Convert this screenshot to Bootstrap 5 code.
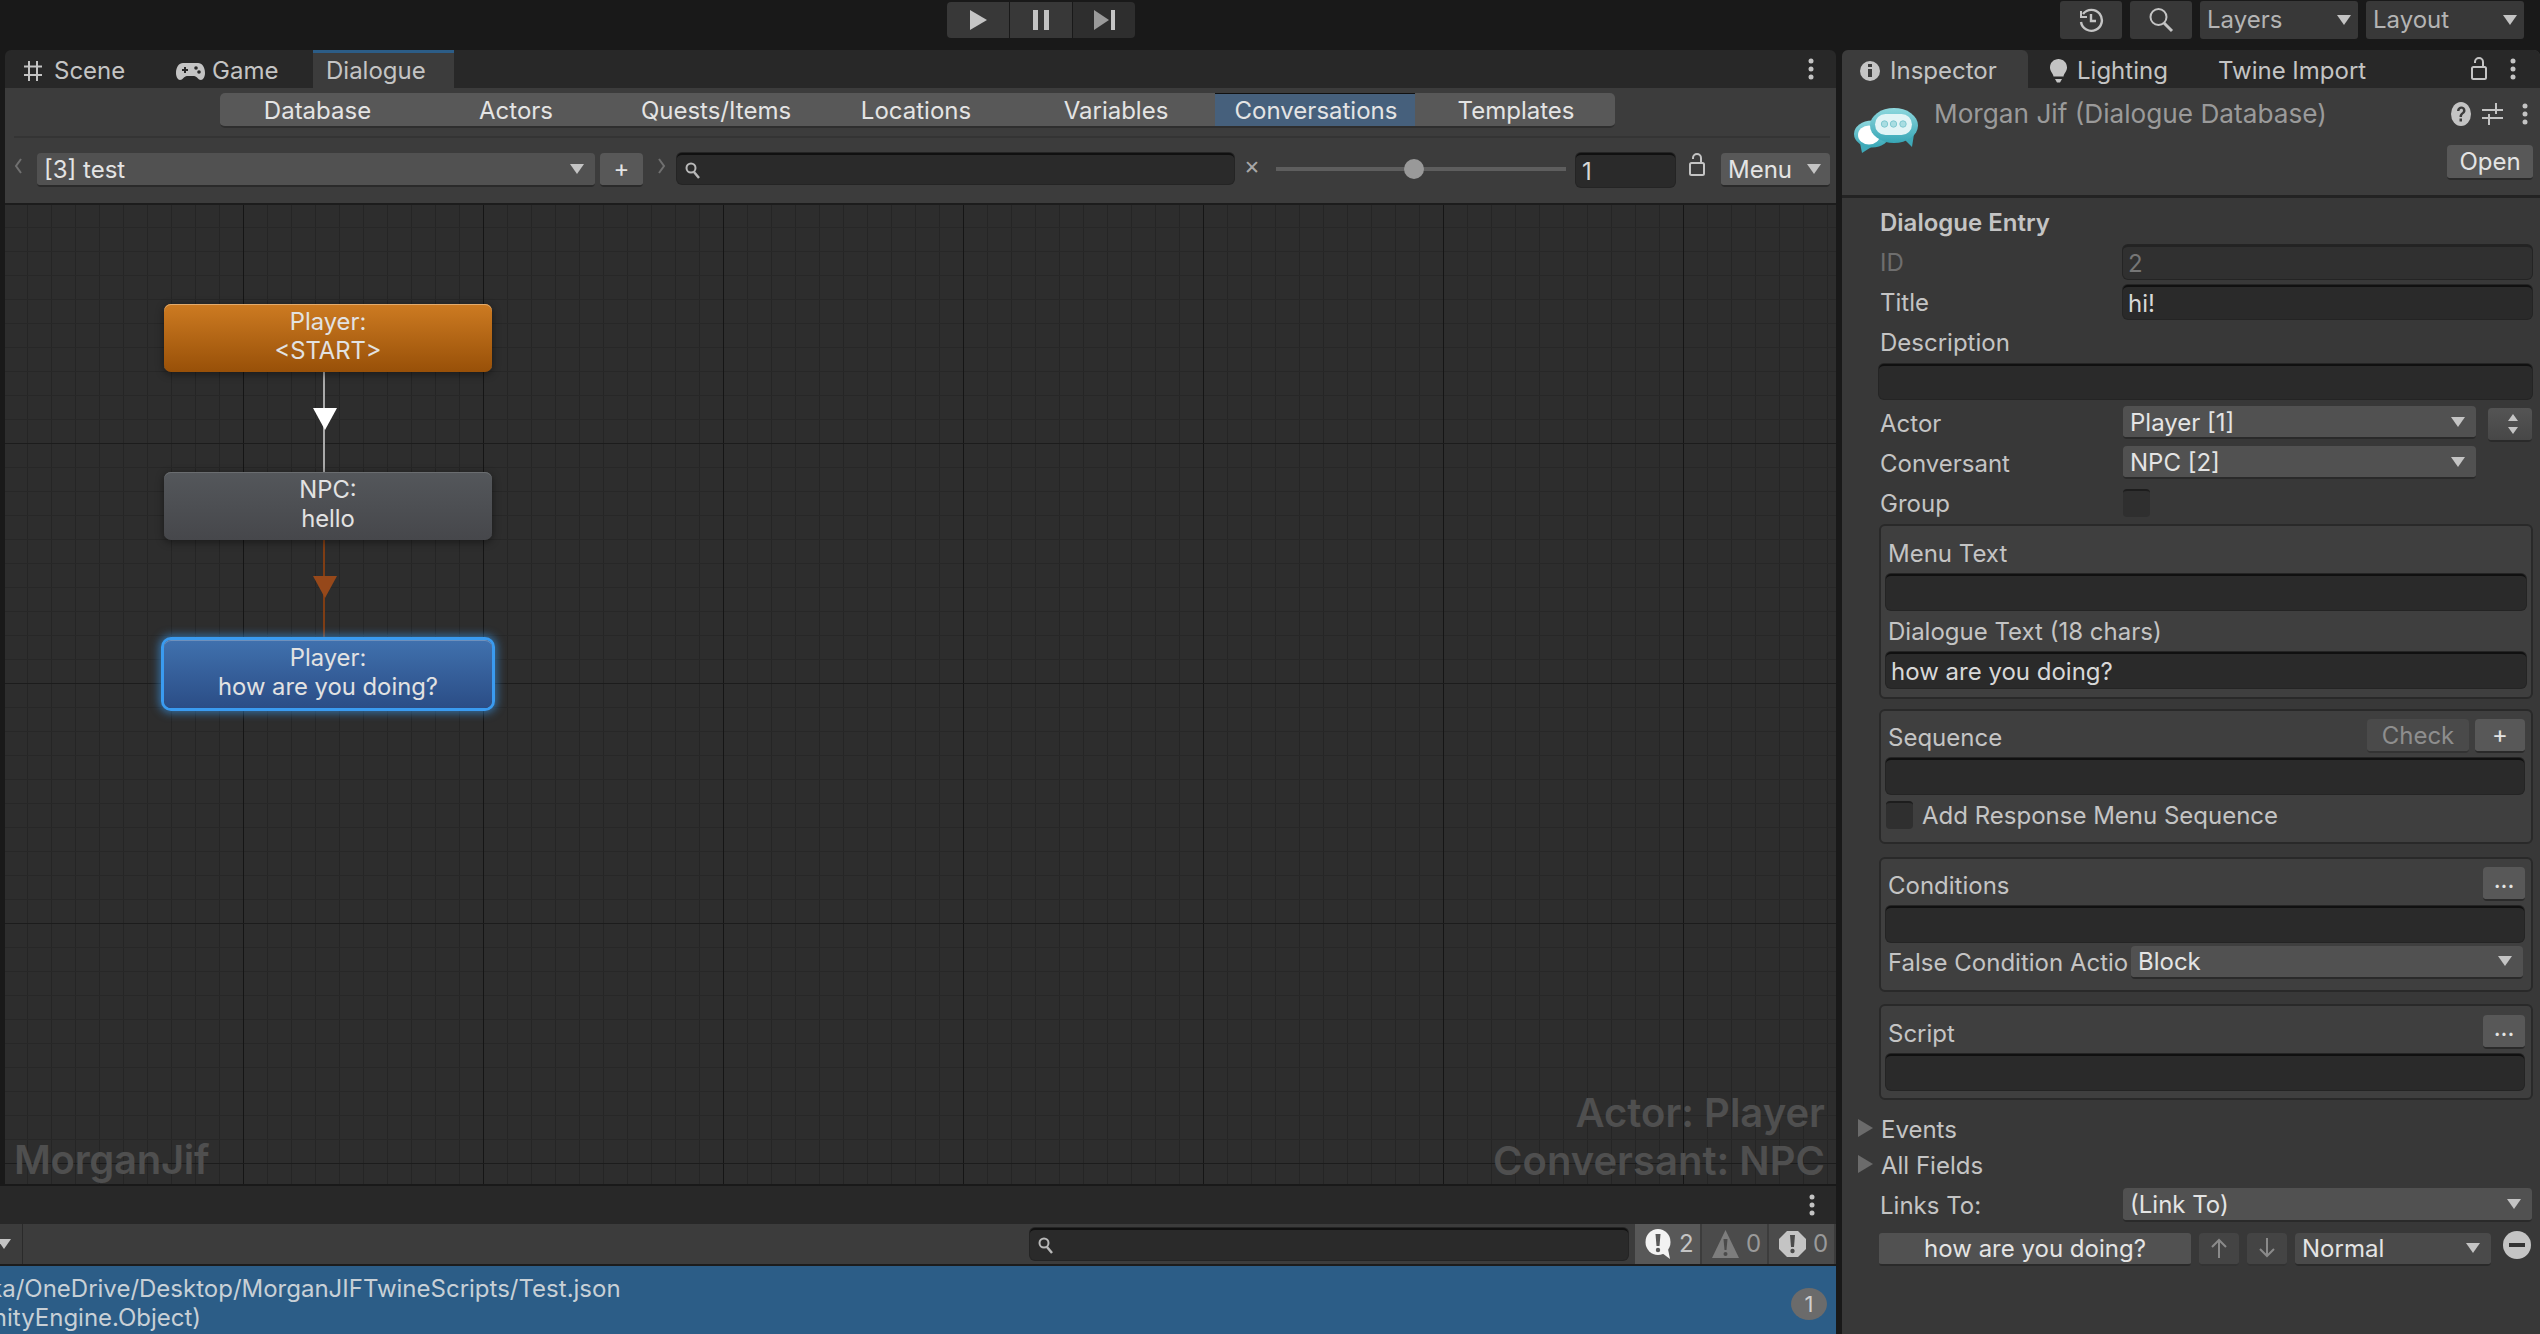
<!DOCTYPE html>
<html lang="en">
<head>
<meta charset="utf-8">
<title>Dialogue Editor</title>
<link href="https://cdn.jsdelivr.net/npm/bootstrap@5.3.0/dist/css/bootstrap.min.css" rel="stylesheet">
<style>
html,body{margin:0;height:1334px;overflow:hidden;background:#191919;}
body{width:2540px;font-family:"Inter","Liberation Sans",sans-serif;font-size:24px;line-height:30px;color:#c4c4c4;}
svg{display:block;flex:none;}
/* top bar */
.top-bar{height:50px;position:relative;}
.play-group{margin-left:947px;padding-top:2px;height:38px;}
.tool-btn{background:#383838;border:0;border-radius:0;padding:0;height:36px;width:62px;margin-right:1px;color:#c4c4c4;display:flex;align-items:center;justify-content:center;}
.tool-btn.is-first{border-radius:4px 0 0 4px;}
.tool-btn.is-last{background:#2e2e2e;border-radius:0 4px 4px 0;}
.top-right{margin-left:924px;padding-top:1px;gap:8px;height:39px;}
.top-cell{background:#383838;border-radius:3px;height:38px;color:#b4b4b4;display:flex;align-items:center;justify-content:center;font-size:24px;}
.top-cell.w-icon{width:62px;}
.top-cell.w-drop{width:158px;justify-content:space-between;padding:0 7px 0 7px;}
/* triangle */
.tri{width:0;height:0;border-left:7px solid transparent;border-right:7px solid transparent;border-top:10px solid #c4c4c4;flex:none;}
.tri-side{width:0;height:0;border-top:9px solid transparent;border-bottom:9px solid transparent;border-left:15px solid #6b6b6b;flex:none;}
/* layout */
.work{height:1284px;}
.col-left{width:1836px;height:1284px;}
.col-right{width:698px;margin-left:6px;height:1284px;background:#383838;border-radius:6px 6px 0 0;overflow:hidden;}
.left-top{margin-left:5px;height:1136px;}
/* tabs */
.tab-strip{height:38px;background:#282828;border-radius:6px 6px 0 0;position:relative;}
.tab-item{height:38px;display:flex;align-items:center;color:#c4c4c4;font-size:24px;padding-top:3px;}
.tab-scene{margin-left:19px;width:152px;}
.tab-game{width:137px;}
.tab-game .ico-gap{margin-right:7px;}
.tab-active{background:#3c3c3c;border-top:3px solid #2c5d87;width:141px;padding-left:13px;padding-top:1px;}
.ins-active{background:#3c3c3c;width:186px;padding-left:18px;border-radius:6px 6px 0 0;}
.ins-light{width:190px;padding-left:22px;}
.ins-twine{width:150px;}
.ico-gap{margin-right:10px;}
.tab-tail{margin-left:auto;padding-right:22px;gap:23px;}
.ins-tail{padding-right:24px;}
/* dialogue toolbar */
.dlg-bar{height:117px;background:#3c3c3c;border-bottom:2px solid #1c1c1c;}
.strip{margin-left:215px;padding-top:5px;height:40px;}
.strip .strip-btn{width:200px;height:35px;padding:2px 0 0 2px;margin:0 1px 0 0;background:#585858;border:0;border-bottom:2px solid #2e2e2e;border-radius:0;color:#e4e4e4;font-size:24px;line-height:30px;}
.strip .strip-btn:first-child{border-radius:5px 0 0 5px;width:195px;padding-left:0;}
.strip .strip-btn:last-child{border-radius:0 5px 5px 0;margin-right:0;}
.strip .strip-btn.is-on{background:#46607c;border-top:1px solid #111;}
.strip-rule{height:2px;background:#343434;margin:8px 6px 0 9px;}
.dlg-row{padding-top:15px;padding-left:9px;height:50px;}
.chev{width:10px;height:16px;margin-right:13px;margin-top:5px;}
.pop{background:#515151;border:0;border-bottom:2px solid #2a2a2a;border-radius:4px;height:34px;color:#e4e4e4;display:flex;align-items:center;justify-content:space-between;padding:2px 11px 0 7px;font-size:24px;line-height:30px;flex:none;}
.pop .tri{margin-top:-2px;}
.pop.tall{height:33px;}
.pop-test{width:558px;}
.mini-btn{background:#585858;border:0;border-bottom:2px solid #2a2a2a;border-radius:4px;color:#e4e4e4;padding:0;display:flex;align-items:center;justify-content:center;flex:none;font-size:24px;}
.mini-plus{width:43px;height:34px;margin-left:5px;}
.chev.chev-right{margin-left:13px;margin-right:11px;}
.well{background:#2a2a2a;border:0;border-top:2px solid #101010;border-radius:5px;box-shadow:0 0 0 1px #242424;color:#d8d8d8;height:36px;padding:1px 5px 0;font-size:24px;line-height:30px;display:flex;align-items:center;flex:none;}
.well.dim{background:#303030;border-top-color:#232323;color:#767676;}
.dlg-search{width:557px;height:31px;padding-left:8px;}
.clear-x{width:18px;margin-left:9px;margin-right:15px;color:#a8a8a8;font-size:19px;line-height:30px;text-align:center;}
.slider-track{width:290px;height:30px;position:relative;}
.slider-track::before{content:"";position:absolute;left:0;right:0;top:14px;height:4px;background:#5e5e5e;}
.slider-thumb{position:absolute;left:128px;top:6px;width:20px;height:20px;border-radius:50%;background:#999;}
.num-field{width:99px;height:34px;margin-left:10px;padding-left:6px;}
.lock-cell{margin-left:14px;margin-right:16px;width:16px;}
.pop.pop-menu{width:109px;background:#585858;padding:2px 9px 0 7px;}
/* canvas */
.graph{height:979px;position:relative;overflow:hidden;background-color:#2d2d2d;
background-image:
linear-gradient(#1c1c1c 0 1px,transparent 1px),
linear-gradient(90deg,#151515 0 1px,transparent 1px),
linear-gradient(#272727 0 1px,transparent 1px),
linear-gradient(90deg,#252525 0 1px,transparent 1px);
background-size:100% 240px,240px 100%,100% 24px,24px 100%;
background-position:0 -2px,-2px 0,0 -2px,-2px 0;}
.node{position:absolute;left:159px;width:328px;height:68px;border-radius:7px;text-align:center;color:#e2e2e2;font-size:23.8px;line-height:29px;padding-top:3px;box-shadow:0 2px 8px rgba(0,0,0,.45);}
.node-start{top:99px;background:linear-gradient(#cd7b22,#985008);box-shadow:inset 0 1px 0 #e3ab6c,0 2px 8px rgba(0,0,0,.45);}
.node-npc{top:267px;background:linear-gradient(#54575b,#46474b);box-shadow:inset 0 1px 0 #6a6d70,0 2px 8px rgba(0,0,0,.45);}
.node-sel{top:435px;background:linear-gradient(#4071ae,#2b4d86);box-shadow:inset 0 1px 0 #6e90bc,0 0 0 3px #3a9bf0,0 0 8px 5px rgba(58,155,240,.6);}
.edge{position:absolute;left:318px;width:2px;height:100px;}
.edge-a{top:167px;background:#a9a9a9;}
.edge-b{top:335px;background:#7f3d14;}
.arrow{position:absolute;left:308px;width:0;height:0;border-left:12px solid transparent;border-right:12px solid transparent;border-top:22px solid #fff;}
.arrow-a{top:203px;}
.arrow-b{top:371px;border-top-color:#96481a;}
.mark-text{position:absolute;color:#4f4f4f;font-weight:600;font-size:40px;line-height:48px;}
.mark-left{left:9px;bottom:0;letter-spacing:-.3px;}
.mark-right{right:11px;bottom:-1px;text-align:right;}
/* console */
.con-tabs{height:38px;background:#282828;}
.con-dots{margin-right:21px;}
.con-tools{height:42px;background:#3c3c3c;border-bottom:2px solid #1c1c1c;position:relative;}
.con-drop{width:23px;height:40px;border-right:1px solid #2a2a2a;overflow:hidden;}
.con-drop .tri{margin-left:-3px;}
.con-search{width:598px;height:32px;margin-left:1007px;padding-left:8px;}
.con-count{height:40px;background:#585858;color:#c4c4c4;display:flex;align-items:center;gap:7px;padding-left:10px;margin-left:2px;width:65px;font-size:24px;flex:none;}
.con-count.is-one{margin-left:7px;}
.con-count.is-off{background:#4b4b4b;color:#9a9a9a;}
.con-log{height:68px;background:#2c5d87;color:#c8d0d6;position:relative;overflow:hidden;line-height:29px;padding-top:8px;}
.con-line{white-space:nowrap;}
.con-l1{margin-left:-11px;}
.con-l2{margin-left:-25px;}
.log-badge{position:absolute;right:9px;top:22px;width:36px;height:32px;border-radius:50%;background:#6b6b6b;color:#cfcfcf;font-size:22px;line-height:32px;text-align:center;}
/* inspector */
.hdr{height:110px;background:#3c3c3c;border-bottom:3px solid #232323;position:relative;}
.hdr-logo{position:absolute;left:12px;top:20px;}
.hdr-title{position:absolute;left:92px;top:11px;color:#9a9a9a;white-space:nowrap;font-size:26.2px;}
.hdr-tools{position:absolute;right:12px;top:14px;gap:11px;}
.hdr-open{position:absolute;right:7px;top:57px;width:86px;height:35px;}
.body-pane{padding:8px 7px 0 37px;}
.row-h{height:34px;display:flex;align-items:center;}
.row-s{height:33px;}
.row-lab{width:244px;padding-left:1px;padding-top:2px;flex:none;color:#c4c4c4;}
.row-lab.is-off{color:#6e6e6e;}
.t-bold{font-weight:600;padding-left:1px;}
.v-wide{width:409px;height:34px;}
.w-full-well{width:653px;height:35px;}
.w-actor{width:353px;}
.side-btn{width:44px;height:34px;margin-left:12px;margin-top:4px;padding-left:6px;background:linear-gradient(#545454,#474747);border-bottom:2px solid #2a2a2a;}
.chk{width:27px;height:28px;background:#2f2f2f;border-top:2px solid #1d1d1d;border-radius:4px;flex:none;}
.mt-a{margin-top:5px;}.mt-b{margin-top:6px;}.mt-c{margin-top:7px;}.mt-d{margin-top:10px;}.mt-e{margin-top:12px;}.mt-f{margin-top:13px;}.mt-g{margin-top:11px;}.mt-h{margin-top:2px;}.mt-i{margin-top:3px;}.mt-j{margin-top:4px;}.mt-k{margin-top:8px;}.mt-l{margin-top:9px;}
.bx{background:#3f3f3f;border:2px solid #292929;border-radius:6px;padding:0 6px 0 5px;width:654px;}
.bx-a{height:175px;}.bx-b{height:135px;}.bx-c{height:135px;}.bx-d{height:96px;}
.bx-well{width:640px;}
.bx-well-s{width:638px;}
.bx-row{height:34px;display:flex;align-items:center;justify-content:space-between;}
.bx-text{padding-left:2px;}
.bx-head{padding-top:3px;}
.b-check{width:102px;height:34px;background:#4a4a4a;color:#8e8e8e;border-bottom-color:#333;margin-left:auto;padding-top:2px;}
.b-plus{width:50px;height:34px;margin-left:6px;}
.b-more{width:42px;height:34px;padding-bottom:6px;}
.lab-resp{margin-left:9px;padding-top:1px;}
.lab-false{white-space:nowrap;width:245px;padding-left:2px;padding-top:2px;overflow:hidden;flex:none;}
.pop-false{width:392px;}
.exp-row{height:34px;display:flex;align-items:center;margin-left:-21px;}
.exp-row .tri-side{margin-right:8px;}
.exp-text{padding-top:3px;}
.act-row{height:34px;display:flex;align-items:center;}
.pop.act-main{width:312px;height:33px;justify-content:center;background:#515151;border-radius:3px;padding:2px 0 0;}
.act-arrow{width:40px;height:33px;background:#444;border-bottom:2px solid #333;margin-left:8px;}
.pop-normal{width:196px;height:33px;margin-left:8px;background:#4a4a4a;}
.minus-cell{margin-left:12px;margin-top:-8px;}
</style>
</head>
<body>
<div class="top-bar d-flex">
  <div class="play-group d-flex">
    <button class="btn tool-btn is-first" aria-label="Play"><svg width="17" height="20" viewBox="0 0 17 20"><path d="M0 0L17 10L0 20Z" fill="#c4c4c4"/></svg></button>
    <button class="btn tool-btn" aria-label="Pause"><svg width="17" height="20" viewBox="0 0 17 20"><path d="M0 0h5v20H0zM11 0h5v20h-5z" fill="#c4c4c4"/></svg></button>
    <button class="btn tool-btn is-last" aria-label="Step"><svg width="21" height="20" viewBox="0 0 21 20"><path d="M0 0L15 10L0 20Z" fill="#9a9a9a"/><path d="M17 0h4v20h-4z" fill="#c4c4c4"/></svg></button>
  </div>
  <div class="top-right d-flex">
    <div class="top-cell w-icon"><svg width="26" height="26" viewBox="0 0 26 26" fill="none" stroke="#c4c4c4" stroke-width="2.4"><path d="M5 7a10.5 10.5 0 1 1-2 8"/><path d="M3 4v6h6" stroke-width="2"/><path d="M13 7v7h5"/></svg></div>
    <div class="top-cell w-icon"><svg width="26" height="26" viewBox="0 0 26 26" fill="none" stroke="#c4c4c4"><circle cx="10.5" cy="10" r="8" stroke-width="2"/><path d="M16 16l8 8" stroke-width="3"/></svg></div>
    <div class="top-cell w-drop"><span>Layers</span><span class="tri"></span></div>
    <div class="top-cell w-drop"><span>Layout</span><span class="tri"></span></div>
  </div>
</div>
<div class="work d-flex">
  <div class="col-left d-flex flex-column">
    <div class="left-top">
      <div class="tab-strip d-flex">
        <div class="tab-item tab-scene"><svg class="ico-gap" width="20" height="22" viewBox="0 0 20 22" stroke="#c4c4c4" stroke-width="2"><path d="M5 1v20M13 1v20M0 6.500h18M0 15h18"/></svg><span>Scene</span></div>
        <div class="tab-item tab-game"><svg class="ico-gap" width="29" height="18" viewBox="0 0 29 18"><path d="M7 1h15c4 0 7 4 7 10 0 4-2 7-4 7-3 0-4-4-7-4h-7c-3 0-4 4-7 4-2 0-4-3-4-7C0 5 3 1 7 1z" fill="#c4c4c4"/><path d="M6 8h6M9 5v6" stroke="#282828" stroke-width="2"/><circle cx="20" cy="6" r="1.800" fill="#282828"/><circle cx="23" cy="10" r="1.800" fill="#282828"/></svg><span>Game</span></div>
        <div class="tab-item tab-active"><span>Dialogue</span></div>
        <div class="tab-tail d-flex align-items-center"><svg width="6" height="22" viewBox="0 0 6 22" fill="#c4c4c4"><circle cx="3" cy="3" r="2.500"/><circle cx="3" cy="11" r="2.500"/><circle cx="3" cy="19" r="2.500"/></svg></div>
      </div>
      <div class="dlg-bar">
        <div class="strip btn-group d-flex">
          <button class="btn strip-btn flex-grow-0">Database</button>
          <button class="btn strip-btn flex-grow-0">Actors</button>
          <button class="btn strip-btn flex-grow-0">Quests/Items</button>
          <button class="btn strip-btn flex-grow-0">Locations</button>
          <button class="btn strip-btn flex-grow-0">Variables</button>
          <button class="btn strip-btn flex-grow-0 is-on">Conversations</button>
          <button class="btn strip-btn flex-grow-0">Templates</button>
        </div>
        <div class="strip-rule"></div>
        <div class="dlg-row d-flex">
          <svg class="chev" viewBox="0 0 10 16" fill="none" stroke="#707070" stroke-width="2"><path d="M7 1L2 8L7 15"/></svg>
          <div class="pop pop-test"><span>[3] test</span><span class="tri"></span></div>
          <button class="btn mini-btn mini-plus">+</button>
          <svg class="chev chev-right" viewBox="0 0 10 16" fill="none" stroke="#707070" stroke-width="2"><path d="M3 1L8 8L3 15"/></svg>
          <div class="well dlg-search"><svg width="15" height="17" viewBox="0 0 15 17" fill="none" stroke="#b8b8b8"><circle cx="6" cy="6" r="4.500" stroke-width="2"/><path d="M9 10l5 6" stroke-width="2.500"/></svg></div>
          <div class="clear-x">✕</div>
          <div class="slider-track"><span class="slider-thumb"></span></div>
          <div class="well num-field">1</div>
          <div class="lock-cell"><svg width="16" height="24" viewBox="0 0 16 24" fill="none" stroke="#c4c4c4" stroke-width="2"><rect x="1" y="10" width="14" height="12" rx="1.500"/><path d="M12 10V5a4 4 0 0 0-8 0v1"/></svg></div>
          <div class="pop pop-menu"><span>Menu</span><span class="tri"></span></div>
        </div>
      </div>
      <div class="graph">
        <div class="edge edge-a"></div>
        <div class="arrow arrow-a"></div>
        <div class="edge edge-b"></div>
        <div class="arrow arrow-b"></div>
        <div class="node node-start">Player:<br>&lt;START&gt;</div>
        <div class="node node-npc">NPC:<br>hello</div>
        <div class="node node-sel">Player:<br>how are you doing?</div>
        <div class="mark-text mark-left">MorganJif</div>
        <div class="mark-text mark-right">Actor: Player<br>Conversant: NPC</div>
      </div>
    </div>
    <div class="con-tabs d-flex align-items-center justify-content-end"><svg class="con-dots" width="6" height="22" viewBox="0 0 6 22" fill="#c4c4c4"><circle cx="3" cy="3" r="2.500"/><circle cx="3" cy="11" r="2.500"/><circle cx="3" cy="19" r="2.500"/></svg></div>
    <div class="con-tools d-flex align-items-center">
      <div class="con-drop d-flex align-items-center"><span class="tri"></span></div>
      <div class="well con-search"><svg width="15" height="17" viewBox="0 0 15 17" fill="none" stroke="#b8b8b8"><circle cx="6" cy="6" r="4.500" stroke-width="2"/><path d="M9 10l5 6" stroke-width="2.500"/></svg></div>
      <div class="con-count is-one"><svg width="27" height="30" viewBox="0 0 27 30"><ellipse cx="13" cy="13" rx="12.500" ry="13" fill="#f2f2f2"/><path d="M17 24l8 6-2-10z" fill="#f2f2f2"/><path d="M10.500 5h5l-1 12h-3z" fill="#585858"/><circle cx="13" cy="21" r="2.200" fill="#585858"/></svg><span>2</span></div>
      <div class="con-count is-off"><svg width="27" height="30" viewBox="0 0 27 30"><path d="M13.500 1L27 29H0z" fill="#7d7d7d"/><path d="M11.500 10h4l-1 11h-2z" fill="#4b4b4b"/><circle cx="13.500" cy="25" r="2" fill="#4b4b4b"/></svg><span>0</span></div>
      <div class="con-count is-off"><svg width="27" height="28" viewBox="0 0 27 28"><path d="M8 1h11l8 8v10l-8 8H8l-8-8V9z" fill="#c4c4c4"/><path d="M11 5h5l-1 12h-3z" fill="#4b4b4b"/><circle cx="13.500" cy="21" r="2.200" fill="#4b4b4b"/></svg><span>0</span></div>
    </div>
    <div class="con-log">
      <div class="con-line con-l1">ka/OneDrive/Desktop/MorganJIFTwineScripts/Test.json</div>
      <div class="con-line con-l2">UnityEngine.Object)</div>
      <span class="log-badge">1</span>
    </div>
  </div>
  <div class="col-right d-flex flex-column">
    <div class="tab-strip d-flex">
      <div class="tab-item ins-active"><svg class="ico-gap" width="20" height="20" viewBox="0 0 20 20"><circle cx="10" cy="10" r="10" fill="#c4c4c4"/><path d="M8 8h4v8H8zM8 3h4v3H8z" fill="#3c3c3c"/></svg><span>Inspector</span></div>
      <div class="tab-item ins-light"><svg class="ico-gap" width="17" height="24" viewBox="0 0 17 24"><path d="M8.500 0C13 0 17 3.500 17 8.500c0 4-3 5.500-3.500 9h-10C3 14 0 12.500 0 8.500 0 3.500 4 0 8.500 0z" fill="#c4c4c4"/><path d="M5 20h7l-2 3.500H7z" fill="#c4c4c4"/></svg><span>Lighting</span></div>
      <div class="tab-item ins-twine"><span>Twine Import</span></div>
      <div class="tab-tail ins-tail d-flex align-items-center"><svg width="16" height="24" viewBox="0 0 16 24" fill="none" stroke="#c4c4c4" stroke-width="2"><rect x="1" y="10" width="14" height="12" rx="1.500"/><path d="M12 10V5a4 4 0 0 0-8 0v1"/></svg><svg width="6" height="22" viewBox="0 0 6 22" fill="#c4c4c4"><circle cx="3" cy="3" r="2.500"/><circle cx="3" cy="11" r="2.500"/><circle cx="3" cy="19" r="2.500"/></svg></div>
    </div>
    <div class="hdr">
      <svg class="hdr-logo" width="64" height="46" viewBox="0 0 64 46">
        <defs><linearGradient id="lg1" x1="0" y1="0" x2="0" y2="1"><stop offset="0" stop-color="#8fd8de"/><stop offset="1" stop-color="#37a6b6"/></linearGradient></defs>
        <path d="M6 35L8 45L19 38Z" fill="#3fa9b8"/><path d="M50 31L58 39L60 26Z" fill="#3fa9b8"/>
        <ellipse cx="18" cy="26" rx="18" ry="13.500" fill="url(#lg1)"/>
        <ellipse cx="15" cy="27" rx="11" ry="9.500" fill="#fff"/>
        <ellipse cx="40" cy="17.500" rx="24" ry="17.500" fill="url(#lg1)"/>
        <rect x="21" y="6" width="37" height="21" rx="10.500" fill="#e2f4f6"/>
        <g fill="#a9dde2" stroke="#7fc8d0"><circle cx="30.500" cy="16" r="3.200"/><circle cx="39.500" cy="16" r="3.200"/><circle cx="49" cy="16" r="3.200"/></g>
      </svg>
      <div class="hdr-title">Morgan Jif (Dialogue Database)</div>
      <div class="hdr-tools d-flex align-items-center">
        <svg width="20" height="24" viewBox="0 0 20 24"><ellipse cx="10" cy="12" rx="10" ry="12" fill="#c4c4c4"/><path d="M6 9c0-6 8.500-6 8.500-.5 0 3.500-3.500 3-3.500 6.500H8.500c0-4.500 3.500-4 3.500-6.500 0-2.500-3.500-2-3.500.5zM8.500 16.500H11V19.500H8.500z" fill="#3c3c3c"/></svg>
        <svg width="21" height="24" viewBox="0 0 21 24" stroke="#c4c4c4" stroke-width="2" fill="none"><path d="M0 8h21M0 16h21M14 1v11M7 12v11"/></svg>
        <svg class="ms-2" width="6" height="22" viewBox="0 0 6 22" fill="#c4c4c4"><circle cx="3" cy="3" r="2.500"/><circle cx="3" cy="11" r="2.500"/><circle cx="3" cy="19" r="2.500"/></svg>
      </div>
      <button class="btn mini-btn hdr-open">Open</button>
    </div>
    <div class="body-pane">
      <div class="row-h"><span class="t-bold">Dialogue Entry</span></div>
      <div class="row-h mt-a"><span class="row-lab is-off">ID</span><div class="well dim v-wide">2</div></div>
      <div class="row-h mt-b"><span class="row-lab">Title</span><div class="well v-wide">hi!</div></div>
      <div class="row-h mt-b"><span class="row-lab">Description</span></div>
      <div class="well w-full-well mt-a"></div>
      <div class="row-h row-s mt-c"><span class="row-lab">Actor</span><div class="pop tall w-actor"><span>Player [1]</span><span class="tri"></span></div><button class="btn mini-btn side-btn" aria-label="Order"><svg width="12" height="22" viewBox="0 0 12 22" fill="#c4c4c4"><path d="M6 1l5 7H1zM1 14h10l-5 7z"/></svg></button></div>
      <div class="row-h row-s mt-c"><span class="row-lab">Conversant</span><div class="pop tall w-actor"><span>NPC [2]</span><span class="tri"></span></div></div>
      <div class="row-h row-s mt-c"><span class="row-lab">Group</span><span class="chk"></span></div>
      <div class="bx bx-a mt-a">
        <div class="row-h mt-l bx-text bx-head">Menu Text</div>
        <div class="well bx-well mt-a"></div>
        <div class="row-h mt-i bx-text bx-head">Dialogue Text (18 chars)</div>
        <div class="well bx-well mt-a">how are you doing?</div>
      </div>
      <div class="bx bx-b mt-d">
        <div class="bx-row mt-k bx-text"><span class="bx-head">Sequence</span><button class="btn mini-btn b-check">Check</button><button class="btn mini-btn b-plus">+</button></div>
        <div class="well bx-well-s mt-a"></div>
        <div class="row-h mt-j"><span class="chk"></span><span class="lab-resp">Add Response Menu Sequence</span></div>
      </div>
      <div class="bx bx-c mt-f">
        <div class="bx-row mt-k bx-text"><span class="bx-head">Conditions</span><button class="btn mini-btn b-more">...</button></div>
        <div class="well bx-well-s mt-a"></div>
        <div class="row-h mt-i"><span class="lab-false">False Condition Actio</span><div class="pop tall pop-false"><span>Block</span><span class="tri"></span></div></div>
      </div>
      <div class="bx bx-d mt-e">
        <div class="bx-row mt-l bx-text"><span class="bx-head">Script</span><button class="btn mini-btn b-more">...</button></div>
        <div class="well bx-well-s mt-a"></div>
      </div>
      <div class="exp-row mt-g"><span class="tri-side"></span><span class="exp-text">Events</span></div>
      <div class="exp-row mt-h"><span class="tri-side"></span><span class="exp-text">All Fields</span></div>
      <div class="row-h mt-c"><span class="row-lab">Links To:</span><div class="pop v-wide"><span>(Link To)</span><span class="tri"></span></div></div>
      <div class="act-row mt-d">
        <div class="pop act-main">how are you doing?</div>
        <button class="btn mini-btn act-arrow" aria-label="Up"><svg width="16" height="20" viewBox="0 0 16 20" fill="none" stroke="#8a8a8a" stroke-width="2"><path d="M8 20V2M1 9l7-7 7 7"/></svg></button>
        <button class="btn mini-btn act-arrow" aria-label="Down"><svg width="16" height="20" viewBox="0 0 16 20" fill="none" stroke="#8a8a8a" stroke-width="2"><path d="M8 0v18M1 11l7 7 7-7"/></svg></button>
        <div class="pop pop-normal"><span>Normal</span><span class="tri"></span></div>
        <svg class="minus-cell" width="28" height="28" viewBox="0 0 28 28"><circle cx="14" cy="14" r="14" fill="#c4c4c4"/><rect x="6" y="12" width="16" height="4" fill="#333"/></svg>
      </div>
    </div>
  </div>
</div>
</body>
</html>
